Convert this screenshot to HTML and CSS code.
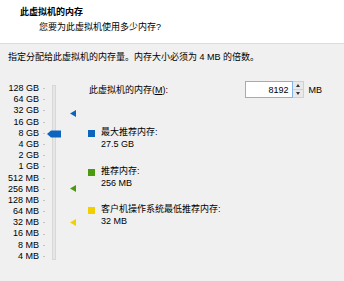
FILE: index.html
```html
<!DOCTYPE html>
<html lang="zh-CN">
<head>
    <meta charset="UTF-8">
    <title>此虚拟机的内存</title>
    <link rel="stylesheet" href="styles.css">
</head>
<body>
    <div class="header">
        <div class="title">此虚拟机的内存</div>
        <div class="subtitle">您要为此虚拟机使用多少内存?</div>
    </div>

    <p class="intro">指定分配给此虚拟机的内存量。内存大小必须为 4 MB 的倍数。</p>

    <div class="main">
        <div class="slider">
            <div class="scale">
                <div class="row"><span class="label">128 GB</span><span class="tick"></span></div>
                <div class="row"><span class="label">64 GB</span><span class="tick"></span></div>
                <div class="row"><span class="label">32 GB</span><span class="tick"></span></div>
                <div class="row"><span class="label">16 GB</span><span class="tick"></span></div>
                <div class="row"><span class="label">8 GB</span><span class="tick"></span></div>
                <div class="row"><span class="label">4 GB</span><span class="tick"></span></div>
                <div class="row"><span class="label">2 GB</span><span class="tick"></span></div>
                <div class="row"><span class="label">1 GB</span><span class="tick"></span></div>
                <div class="row"><span class="label">512 MB</span><span class="tick"></span></div>
                <div class="row"><span class="label">256 MB</span><span class="tick"></span></div>
                <div class="row"><span class="label">128 MB</span><span class="tick"></span></div>
                <div class="row"><span class="label">64 MB</span><span class="tick"></span></div>
                <div class="row"><span class="label">32 MB</span><span class="tick"></span></div>
                <div class="row"><span class="label">16 MB</span><span class="tick"></span></div>
                <div class="row"><span class="label">8 MB</span><span class="tick"></span></div>
                <div class="row"><span class="label">4 MB</span><span class="tick"></span></div>
            </div>
            <div class="track"></div>

            <!-- thumb at 8 GB -->
            <svg class="thumb" width="14" height="8" viewBox="0 0 14 8">
                <polygon points="0,4 4,0.5 14,0.5 14,7.5 4,7.5" fill="#0c64bd"/>
            </svg>

            <!-- markers: max recommended, recommended, guest minimum -->
            <svg class="marker" style="top: 26.5px" width="6" height="7" viewBox="0 0 6 7">
                <polygon points="0,3.5 6,0 6,7" fill="#0c64bd"/>
            </svg>
            <svg class="marker" style="top: 102px" width="6" height="7" viewBox="0 0 6 7">
                <polygon points="0,3.5 6,0 6,7" fill="#4c9a12"/>
            </svg>
            <svg class="marker" style="top: 136px" width="6" height="7" viewBox="0 0 6 7">
                <polygon points="0,3.5 6,0 6,7" fill="#f2d000"/>
            </svg>
        </div>

        <div class="panel">
            <div class="memory-row">
                <label for="memory">此虚拟机的内存(<u>M</u>):</label>
                <div class="spin">
                    <input type="text" id="memory" value="8192">
                    <div class="spin-buttons">
                        <span class="spin-up"></span>
                        <span class="spin-down"></span>
                    </div>
                </div>
                <span class="unit">MB</span>
            </div>

            <div class="legend">
                <span class="swatch blue"></span>
                <div>
                    <div>最大推荐内存:</div>
                    <div>27.5 GB</div>
                </div>
            </div>

            <div class="legend">
                <span class="swatch green"></span>
                <div>
                    <div>推荐内存:</div>
                    <div>256 MB</div>
                </div>
            </div>

            <div class="legend">
                <span class="swatch yellow"></span>
                <div>
                    <div>客户机操作系统最低推荐内存:</div>
                    <div>32 MB</div>
                </div>
            </div>
        </div>
    </div>
</body>
</html>
```

FILE: styles.css
```css
* {
    margin: 0;
    padding: 0;
    box-sizing: border-box;
}

body {
    width: 344px;
    height: 281px;
    overflow: hidden;
    font-family: "Liberation Sans", "Noto Sans CJK SC", sans-serif;
    font-size: 9px;
    line-height: 12px;
    background-color: #f0f0f0;
    color: #000;
}

.header {
    height: 44px;
    padding: 6px 0 0 20px;
    background-color: #fff;
    border-bottom: 1px solid #dcdcdc;
}

.title {
    font-weight: bold;
}

.subtitle {
    margin-top: 3px;
    padding-left: 19px;
}

.intro {
    margin-top: 7px;
    padding-left: 8px;
}

.main {
    display: flex;
    margin-top: 20px;
}

.slider {
    position: relative;
    display: flex;
    width: 88px;
    flex-shrink: 0;
}

.row {
    display: flex;
    align-items: center;
    height: 11.2px;
    line-height: 11.2px;
}

.label {
    width: 39px;
    text-align: right;
    white-space: nowrap;
}

.tick {
    width: 2px;
    height: 1px;
    margin-left: 4px;
    background-color: #c4c4c4;
}

.track {
    width: 4px;
    margin: 2px 0 2px 7px;
    background-color: #e6e6e6;
    border: 1px solid #d8d8d8;
}

.thumb {
    position: absolute;
    left: 47px;
    top: 47px;
}

.marker {
    position: absolute;
    left: 70px;
}

.panel {
    flex: 1;
    padding-right: 22px;
}

.memory-row {
    display: flex;
    align-items: center;
    height: 17px;
    margin-top: -2px;
    padding-left: 1px;
}

.memory-row label {
    flex: 1;
}

.spin {
    display: flex;
    height: 17px;
}

.spin input {
    width: 48px;
    height: 17px;
    padding: 0 3px;
    font-family: inherit;
    font-size: 9px;
    text-align: right;
    color: #000;
    background-color: #fff;
    border: 1px solid #7eb4ea;
    outline: none;
}

.spin-buttons {
    display: flex;
    flex-direction: column;
    width: 11px;
    border: 1px solid #d0d0d0;
    border-left: none;
    background-color: #e9e9e9;
}

.spin-up,
.spin-down {
    flex: 1;
    display: flex;
    align-items: center;
    justify-content: center;
}

.spin-up {
    border-bottom: 1px solid #d0d0d0;
}

.spin-up::after {
    content: "";
    border-left: 2.5px solid transparent;
    border-right: 2.5px solid transparent;
    border-bottom: 3px solid #333;
}

.spin-down::after {
    content: "";
    border-left: 2.5px solid transparent;
    border-right: 2.5px solid transparent;
    border-top: 3px solid #333;
}

.unit {
    margin-left: 5px;
}

.legend {
    display: flex;
    margin-top: 14.5px;
}

.memory-row + .legend {
    margin-top: 28px;
}

.swatch {
    width: 7px;
    height: 7px;
    margin: 4px 6px 0 0;
    flex-shrink: 0;
}

.blue {
    background-color: #0c64bd;
}

.green {
    background-color: #4c9a12;
}

.yellow {
    background-color: #f2d000;
}
```
